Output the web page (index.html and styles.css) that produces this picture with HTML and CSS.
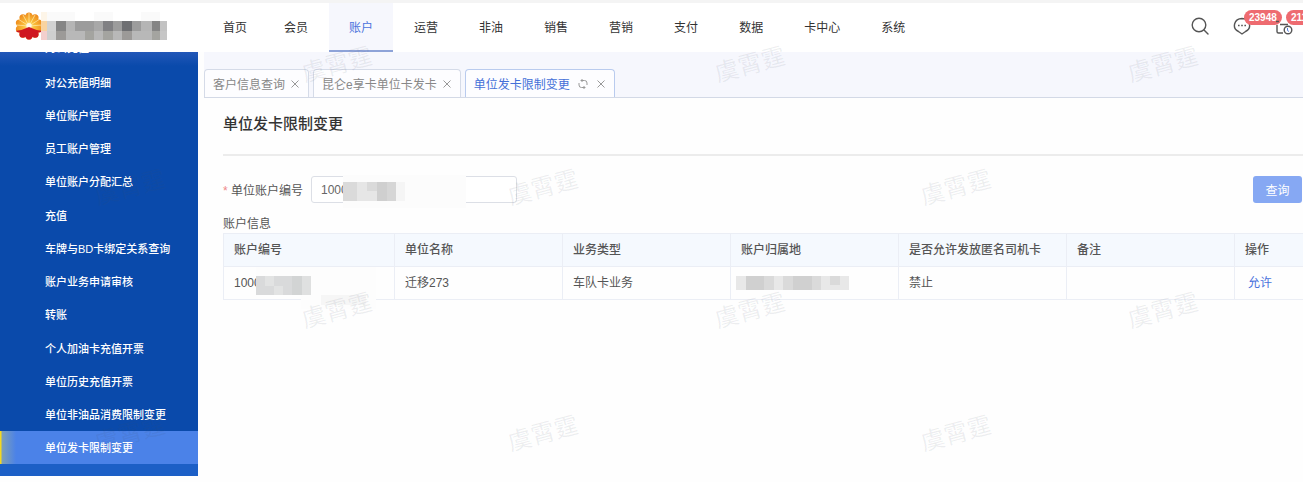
FILE: index.html
```html
<!DOCTYPE html>
<html lang="zh-CN">
<head>
  <meta charset="UTF-8" />
  <meta name="viewport" content="width=device-width, initial-scale=1.0"/>
  <title>单位发卡限制变更</title>
  <link rel="stylesheet" href="styles.css">
</head>
<body>

  <!-- Header -->
  <header class="header">
    <div class="brand">
      <svg class="logo" viewBox="0 0 28 28" width="28" height="28">
        <defs>
          <radialGradient id="sun" cx="50%" cy="52%" r="50%">
            <stop offset="0" stop-color="#fff3c0"/>
            <stop offset="0.35" stop-color="#fbc23c"/>
            <stop offset="1" stop-color="#ee8a1c"/>
          </radialGradient>
          <clipPath id="flower">
            <circle cx="14" cy="14" r="11"/>
            <circle cx="14" cy="4" r="3.6"/><circle cx="20" cy="5.8" r="3.6"/>
            <circle cx="23.6" cy="11" r="3.6"/><circle cx="23.6" cy="17" r="3.6"/>
            <circle cx="20" cy="22.2" r="3.6"/><circle cx="14" cy="24" r="3.6"/>
            <circle cx="8" cy="22.2" r="3.6"/><circle cx="4.4" cy="17" r="3.6"/>
            <circle cx="4.4" cy="11" r="3.6"/><circle cx="8" cy="5.8" r="3.6"/>
          </clipPath>
        </defs>
        <g clip-path="url(#flower)">
          <rect width="28" height="28" fill="url(#sun)"/>
          <path d="M14 14 14 1M14 14 8 3M14 14 20 3M14 14 3 7M14 14 25 7M14 14 1 13M14 14 27 13" stroke="#fde6a0" stroke-width="0.8"/>
          <circle cx="14" cy="13.5" r="2.6" fill="#fffbe8"/>
          <path d="M0 19Q7 18.500 14 15Q21 18.500 28 19V28H0Z" fill="#cf1720"/>
        </g>
      </svg>
      <svg class="brand-name" viewBox="0 0 126 28" width="126" height="28" shape-rendering="crispEdges">
        <path fill="#fdf5e8" d="M0 0h6v9H0z"/>
        <path fill="#fafafa" d="M6 0h28v9H6zM53 0h19v9H53zM100 0h19v9h-19z"/>
        <path fill="#f8d3a0" d="M0 9h6v10H0z"/>
        <path fill="#d2d2d2" d="M6 9h9v10H6z"/>
        <path fill="#858585" d="M15 9h10v10H15zM111 9h8v10h-8z"/>
        <path fill="#b5b5b5" d="M25 9h9v10h-9zM100 9h11v10h-11z"/>
        <path fill="#9c9c9c" d="M34 9h19v10H34zM72 9h9v10h-9zM91 9h9v10h-9z"/>
        <path fill="#a8a8a8" d="M53 9h9v10h-9z"/>
        <path fill="#808083" d="M62 9h10v10H62z"/>
        <path fill="#6e6f72" d="M81 9h10v10H81z"/>
        <path fill="#c2c2c2" d="M119 9h7v10h-7z"/>
        <path fill="#f3cfcd" d="M0 19h6v9H0z"/>
        <path fill="#cfcfcf" d="M6 19h9v9H6z"/>
        <path fill="#9c9a98" d="M15 19h10v9H15zM81 19h10v9H81z"/>
        <path fill="#b8b8b8" d="M25 19h19v9H25zM53 19h9v9h-9zM72 19h9v9h-9zM91 19h20v9H91z"/>
        <path fill="#a4a4a0" d="M44 19h9v9h-9zM62 19h10v9H62zM111 19h8v9h-8z"/>
        <path fill="#c6c6c6" d="M119 19h7v9h-7z"/>
      </svg>
    </div>
    <nav class="nav">
      <a href="#" class="home">首页</a>
      <a href="#">会员</a>
      <a href="#" class="active">账户</a>
      <a href="#">运营</a>
      <a href="#">非油</a>
      <a href="#">销售</a>
      <a href="#">营销</a>
      <a href="#">支付</a>
      <a href="#">数据</a>
      <a href="#">卡中心</a>
      <a href="#">系统</a>
    </nav>
    <div class="tools">
      <button type="button" class="tool" aria-label="搜索">
        <svg viewBox="0 0 18 18" width="18" height="18" fill="none" stroke="#555" stroke-width="1.4" stroke-linecap="round">
          <circle cx="8" cy="8" r="6.8"/><path d="M13 13l4 4"/>
        </svg>
      </button>
      <button type="button" class="tool" aria-label="消息">
        <svg viewBox="0 0 18 18" width="18" height="18" fill="none" stroke="#555" stroke-width="1.4">
          <path d="M9 1.500a7.600 6.900 0 0 1 3.500 13L9 17l-3.500-2.500A7.600 6.900 0 0 1 9 1.500z"/>
          <path d="M5 8.500h1.600M8.200 8.500h1.600M11.400 8.500h1.600" stroke-width="1.600"/>
        </svg>
        <span class="badge">23948</span>
      </button>
      <button type="button" class="tool" aria-label="待办">
        <svg viewBox="0 0 18 18" width="18" height="18" fill="none" stroke="#555" stroke-width="1.4">
          <path d="M8 16H3.500Q2 16 2 14.500V8M5 7.500h8M1 4.500h3"/>
          <circle cx="13" cy="13" r="3.800"/><path d="M12.500 11v2.500l1.500 1" stroke="#5580e0" stroke-width="1"/>
        </svg>
        <span class="badge">211</span>
      </button>
    </div>
  </header>

  <div class="layout">
    <!-- Sidebar -->
    <aside class="sidebar">
      <a href="#" class="cut">对公充值</a>
      <a href="#">对公充值明细</a>
      <a href="#">单位账户管理</a>
      <a href="#">员工账户管理</a>
      <a href="#">单位账户分配汇总</a>
      <a href="#">充值</a>
      <a href="#">车牌与BD卡绑定关系查询</a>
      <a href="#">账户业务申请审核</a>
      <a href="#">转账</a>
      <a href="#">个人加油卡充值开票</a>
      <a href="#">单位历史充值开票</a>
      <a href="#">单位非油品消费限制变更</a>
      <a href="#" class="active">单位发卡限制变更</a>
    </aside>

    <main class="main">
      <!-- Open pages -->
      <div class="tabs">
        <div class="tab">
          <a href="#">客户信息查询</a>
          <button type="button" aria-label="关闭"><svg viewBox="0 0 10 10" width="10" height="10"><path d="M1.500 1.500l7 7M8.500 1.500l-7 7"/></svg></button>
        </div>
        <div class="tab">
          <a href="#">昆仑e享卡单位卡发卡</a>
          <button type="button" aria-label="关闭"><svg viewBox="0 0 10 10" width="10" height="10"><path d="M1.500 1.500l7 7M8.500 1.500l-7 7"/></svg></button>
        </div>
        <div class="tab current">
          <a href="#">单位发卡限制变更</a>
          <button type="button" aria-label="刷新"><svg viewBox="0 0 10 10" width="10" height="10"><path d="M1 4V6Q1 8.500 3.500 8.500H7M5.500 7l1.500 1.500L5.500 10M9 6V4Q9 1.500 6.500 1.500H3M4.500 0L3 1.500 4.500 3"/></svg></button>
          <button type="button" aria-label="关闭"><svg viewBox="0 0 10 10" width="10" height="10"><path d="M1.500 1.500l7 7M8.500 1.500l-7 7"/></svg></button>
        </div>
      </div>

      <section class="content">
        <h1>单位发卡限制变更</h1>

        <form class="search">
          <label for="account"><span class="required">*</span> 单位账户编号</label>
          <div class="field">
            <input type="text" id="account" name="account" value="1000">
            <svg class="mask" viewBox="0 0 123 33" width="123" height="33" shape-rendering="crispEdges">
              <path fill="#fcfcfc" d="M0 0h123v33H0z"/>
              <path fill="#dadada" d="M0 7h14v19H0zM24 7h10v9H24z"/>
              <path fill="#e6e6e6" d="M14 7h10v19H14zM24 16h10v10H24z"/>
              <path fill="#cfcfcf" d="M34 7h10v19H34z"/>
              <path fill="#d6d6d6" d="M44 7h9v19h-9z"/>
              <path fill="#f5f5f5" d="M53 7h9v19h-9z"/>
            </svg>
          </div>
          <button type="button" class="btn">查询</button>
        </form>

        <table>
          <caption>账户信息</caption>
          <colgroup>
            <col class="first"><col class="mid"><col class="mid"><col class="mid"><col class="mid"><col class="mid"><col>
          </colgroup>
          <thead>
            <tr>
              <th>账户编号</th>
              <th>单位名称</th>
              <th>业务类型</th>
              <th>账户归属地</th>
              <th>是否允许发放匿名司机卡</th>
              <th>备注</th>
              <th>操作</th>
            </tr>
          </thead>
          <tbody>
            <tr>
              <td>
                <div class="masked">1000<svg class="mask" viewBox="0 0 120 42" width="120" height="42" shape-rendering="crispEdges">
                  <path fill="#fdfdfd" d="M0 0h120v42H45V28H0z"/>
                  <path fill="#d9dadb" d="M0 9h36v19H0z"/>
                  <path fill="#e2e3e3" d="M9 9h9v10H9zM18 19h9v9h-9z"/>
                  <path fill="#d2d4d4" d="M36 9h10v19H36z"/>
                  <path fill="#dfe0e0" d="M46 9h9v19h-9z"/>
                  <path fill="#f6f6f6" d="M65 28h45v10H65z"/>
                </svg></div>
              </td>
              <td>迁移273</td>
              <td>车队卡业务</td>
              <td>
                <svg class="place" viewBox="0 0 113 14" width="113" height="14" shape-rendering="crispEdges">
                  <path fill="#e8e8e8" d="M0 0h113v14H0z"/>
                  <path fill="#d0d0d0" d="M10 0h18v14H10zM57 0h19v14H57z"/>
                  <path fill="#dadada" d="M28 0h10v14H28zM47 0h10v14H47zM76 0h9v14h-9zM94 0h10v9H94z"/>
                </svg>
              </td>
              <td>禁止</td>
              <td></td>
              <td><a href="#" class="allow">允许</a></td>
            </tr>
          </tbody>
        </table>
      </section>
    </main>
  </div>

  <!-- Watermark -->
  <div class="watermark" aria-hidden="true">
    <div class="row shifted"><span>虞霄霆</span><span>虞霄霆</span><span>虞霄霆</span></div>
    <div class="row"><span>虞霄霆</span><span>虞霄霆</span><span>虞霄霆</span></div>
    <div class="row shifted"><span>虞霄霆</span><span>虞霄霆</span><span>虞霄霆</span></div>
    <div class="row"><span>虞霄霆</span><span>虞霄霆</span><span>虞霄霆</span></div>
  </div>

</body>
</html>
```
FILE: styles.css
```css
* {
  box-sizing: border-box;
}
body {
  font-family: "Liberation Sans", "Noto Sans CJK SC", sans-serif;
  font-size: 12px;
  color: #555;
  background-color: #fefefe;
  margin: 0;
  padding-bottom: 6px;
  height: 100vh;
  display: flex;
  flex-direction: column;
  position: relative;
  overflow: hidden;
}
a {
  color: inherit;
  text-decoration: none;
}
button {
  font-family: inherit;
  border: none;
  background: none;
  padding: 0;
  cursor: pointer;
}
svg {
  display: block;
}

/* header */
.header {
  flex: none;
  display: flex;
  height: 52px;
  border-top: 3px solid #f4f4f4;
  background-color: #fff;
}
.brand {
  width: 203px;
  padding: 9px 0 0 15px;
  display: flex;
}
.logo {
  margin-right: -2px;
}
.nav {
  display: flex;
  gap: 1px;
}
.nav a {
  padding: 0 20px;
  line-height: 50px;
  color: #333;
}
.nav .home {
  padding-right: 16px;
}
.nav .active {
  color: #4a72dc;
  background-color: #f6f7fd;
  border-bottom: 2px solid #8ea3d8;
}
.tools {
  margin-left: auto;
  padding: 14px 10px 0 0;
  display: flex;
  align-items: flex-start;
  gap: 24px;
}
.tool {
  position: relative;
}
.badge {
  position: absolute;
  left: 11px;
  top: -7px;
  padding: 0 5px;
  border-radius: 8px;
  background-color: #ee6b70;
  color: #fff;
  font-size: 10px;
  font-weight: bold;
  line-height: 15px;
}

/* sidebar */
.layout {
  flex: 1;
  display: flex;
  min-height: 0;
}
.sidebar {
  flex: none;
  width: 198px;
  padding-bottom: 12px;
  display: flex;
  flex-direction: column;
  overflow: hidden;
  background: linear-gradient(#2257b8 0, #0a4aab 14px, #0a4aab 379px, #1c5fc6 412px);
}
.sidebar a {
  flex: 1;
  display: flex;
  align-items: center;
  padding-left: 45px;
  font-size: 11px;
  font-weight: 500;
  color: #fff;
}
.sidebar .cut {
  flex: 0 0 13px;
  min-height: 0;
  height: 13px;
  align-items: flex-end;
  line-height: 33px;
}
.sidebar .active {
  background: linear-gradient(90deg, #f5d820 0, #f5d820 1px, #7d9fb8 2px, #4b82e8 16px);
}

/* tabs */
.main {
  flex: 1;
  min-width: 0;
  padding-left: 6px;
}
.tabs {
  height: 46px;
  display: flex;
  align-items: flex-end;
  gap: 4px;
  background-color: #f6f7fd;
  border-bottom: 1px solid #d3d9e6;
}
.tab {
  height: 28px;
  display: flex;
  align-items: center;
  gap: 5px;
  padding: 0 8px;
  border: 1px solid #d5dbe8;
  border-bottom: none;
  border-radius: 4px 4px 0 0;
  background-color: #fdfdff;
  color: #888;
}
.tab svg {
  fill: none;
  stroke: #999;
}
.current {
  gap: 8px;
  color: #4470d8;
  border-color: #b9cbee;
}

/* content */
.content {
  padding: 0 0 0 19px;
}
h1 {
  margin: 0;
  padding: 15px 0 19px;
  border-bottom: 2px solid #ececec;
  font-size: 15px;
  font-weight: 500;
  line-height: 22px;
  color: #333;
}
.search {
  display: flex;
  align-items: center;
  padding: 20px 1px 12px 0;
}
.search label {
  width: 88px;
}
.required {
  color: #e88;
}
.field {
  position: relative;
}
.field input {
  width: 206px;
  height: 27px;
  padding: 0 9px;
  border: 1px solid #dcdfe6;
  border-radius: 3px;
  font-family: inherit;
  font-size: 12px;
  color: #666;
}
.mask {
  position: absolute;
}
.field .mask {
  left: 32px;
  top: -1px;
}
.btn {
  margin-left: auto;
  width: 49px;
  height: 27px;
  border-radius: 3px;
  background-color: #86a8f3;
  color: #fff;
  font-size: 12px;
}
table {
  width: 100%;
  table-layout: fixed;
  border-collapse: collapse;
}
caption {
  text-align: left;
  line-height: 18px;
}
.first {
  width: 171px;
}
.mid {
  width: 168px;
}
th, td {
  height: 33px;
  padding: 0 10px;
  border: 1px solid #ebeef5;
  border-right: none;
  text-align: left;
  line-height: 18px;
}
th {
  background-color: #f5f9fe;
  font-weight: 500;
}
.masked {
  position: relative;
}
.masked .mask {
  left: 22px;
  top: -7px;
}
.place {
  margin-left: -5px;
}
.allow {
  padding-left: 3px;
  color: #4a72dc;
}

/* watermark */
.watermark {
  position: absolute;
  inset: 0;
  padding-top: 3px;
  overflow: hidden;
  pointer-events: none;
}
.row {
  display: flex;
  padding-left: 93px;
}
.row.shifted {
  padding-left: 300px;
}
.row span {
  flex: none;
  width: 74px;
  margin-right: 339px;
  text-align: center;
  font-size: 24px;
  line-height: 123px;
  color: rgba(70, 80, 100, 0.09);
  transform: rotate(-15deg);
}
```
